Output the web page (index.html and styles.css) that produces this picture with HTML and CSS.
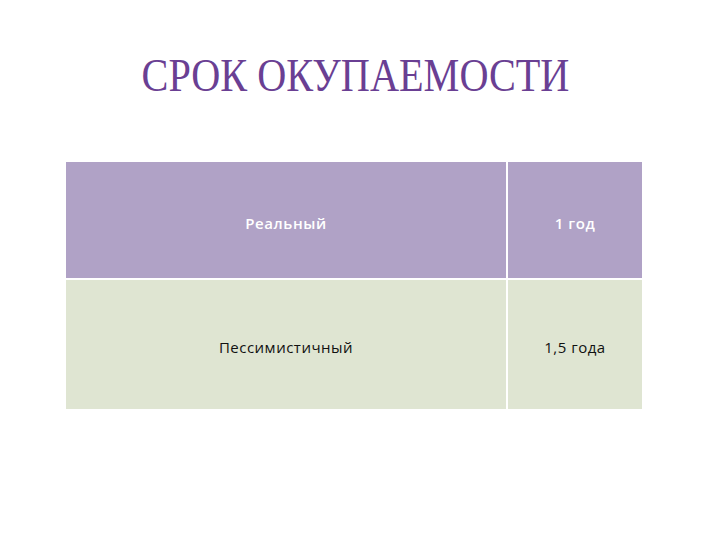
FILE: index.html
```html
<!DOCTYPE html>
<html lang="ru">
<head>
<meta charset="utf-8">
<link rel="stylesheet" href="styles.css">
</head>
<body>
<div class="slide">
  <h1 class="title">СРОК ОКУПАЕМОСТИ</h1>
  <div class="table">
    <div class="row head">
      <div class="cell name">Реальный</div>
      <div class="cell val">1 год</div>
    </div>
    <div class="row body">
      <div class="cell name">Пессимистичный</div>
      <div class="cell val">1,5 года</div>
    </div>
  </div>
</div>
</body>
</html>
```
FILE: styles.css
```css
html, body {
  margin: 0;
  padding: 0;
  background: #ffffff;
}
.slide {
  width: 720px;
  height: 540px;
  display: flex;
  flex-direction: column;
}
.title {
  margin: 48px 0 0 0;
  align-self: center;
  font-family: "Liberation Serif", "DejaVu Serif", serif;
  font-weight: normal;
  font-size: 46px;
  line-height: 56px;
  color: #6a3f93;
  transform: translateX(-5px) scaleX(0.875);
  white-space: nowrap;
}
.table {
  margin: 58px 0 0 66px;
  width: 576px;
  display: flex;
  flex-direction: column;
  gap: 2px;
}
.row {
  display: flex;
  gap: 2px;
}
.row.head {
  height: 116px;
}
.row.body {
  height: 129px;
}
.cell {
  display: flex;
  align-items: center;
  justify-content: center;
  font-family: "Open Sans", "DejaVu Sans", sans-serif;
}
.name { width: 440px; }
.val { flex: 1; }
.head .cell {
  background: #b0a2c6;
  color: #ffffff;
  font-size: 15px;
  font-weight: 600;
  letter-spacing: 0.6px;
  padding-top: 5px;
}
.body .cell {
  background: #dfe5d2;
  color: #111111;
  font-size: 15px;
  letter-spacing: 0.5px;
  padding-top: 4px;
}
```
